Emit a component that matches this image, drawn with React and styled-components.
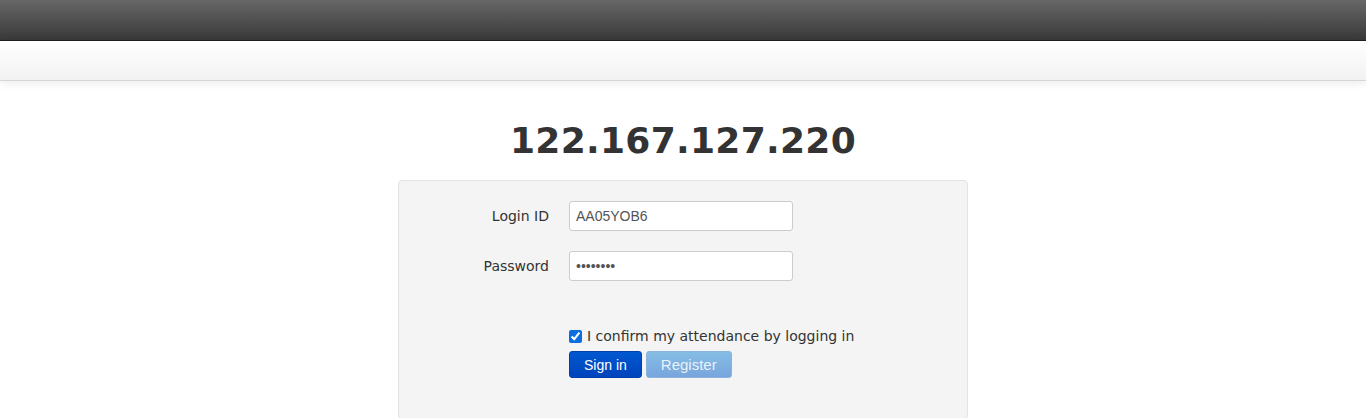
import React from "react"
import styled, { createGlobalStyle } from "styled-components"

// Login page: dark top bar, light subnav, host heading and a grey form well

const GlobalStyle = createGlobalStyle`
  html, body {
    margin: 0;
    padding: 0;
    background: #fff;
    font-family: "DejaVu Sans", Verdana, sans-serif;
    color: #333;
  }
`

const App = () => {
  return (
    <>
      <GlobalStyle />
      <TopBar />
      <SubNav />
      <Main>
        <Heading>122.167.127.220</Heading>
        <Well>
          <FieldRow>
            <Label htmlFor="login">Login ID</Label>
            <Input id="login" type="text" defaultValue="AA05YOB6" />
          </FieldRow>
          <FieldRow>
            <Label htmlFor="password">Password</Label>
            <Input id="password" type="password" defaultValue="12345678" />
          </FieldRow>
          <Actions>
            <CheckLine>
              <Check type="checkbox" defaultChecked />
              I confirm my attendance by logging in
            </CheckLine>
            <Buttons>
              <Button $variant="primary">Sign in</Button>
              <Button $variant="muted">Register</Button>
            </Buttons>
          </Actions>
        </Well>
      </Main>
    </>
  )
}

const TopBar = styled.div`
  height: 40px;
  background: linear-gradient(to bottom, #676767, #393939);
  border-bottom: 1px solid #1f1f1f;
`

const SubNav = styled.div`
  height: 39px;
  background: linear-gradient(to bottom, #ffffff, #f2f2f2);
  border-bottom: 1px solid #d6d6d6;
  box-shadow: 0 1px 10px rgba(0, 0, 0, 0.1);
`

const Main = styled.main`
  display: flex;
  flex-direction: column;
  align-items: center;
  padding-top: 40px;
`

const Heading = styled.h1`
  margin: 0 0 19px;
  font-size: 36px;
  line-height: 40px;
  font-weight: bold;
  letter-spacing: 0.3px;
  color: #333;
`

const Well = styled.section`
  box-sizing: border-box;
  width: 570px;
  padding: 20px 20px 40px;
  background: #f4f4f4;
  border: 1px solid #e3e3e3;
  border-radius: 4px;
  display: grid;
  grid-template-columns: 130px 1fr;
  column-gap: 20px;
  row-gap: 20px;
`

const FieldRow = styled.div`
  display: contents;
`

const Label = styled.label`
  align-self: center;
  text-align: right;
  font-size: 14px;
  line-height: 20px;
  color: #333;
`

const Input = styled.input`
  box-sizing: border-box;
  width: 224px;
  height: 30px;
  padding: 4px 6px;
  border: 1px solid #ccc;
  border-radius: 3px;
  background: #fff;
  font-family: "Liberation Sans", Arial, sans-serif;
  font-size: 14px;
  color: #555;
  outline: none;
`

const Actions = styled.div`
  grid-column: 2;
  margin-top: 25px;
  display: flex;
  flex-direction: column;
  gap: 5px;
`

const CheckLine = styled.label`
  display: flex;
  align-items: center;
  gap: 5px;
  font-size: 14px;
  line-height: 20px;
  color: #333;
`

const Check = styled.input`
  width: 13px;
  height: 13px;
  margin: 0;
  accent-color: #0b6ee0;
`

const Buttons = styled.div`
  display: flex;
  gap: 4px;
`

const Button = styled.button`
  box-sizing: border-box;
  height: 27px;
  padding: 0 14px;
  border-radius: 3px;
  font-family: "Liberation Sans", Arial, sans-serif;
  font-size: ${(p) => (p.$variant === "primary" ? "14px" : "15px")};
  color: ${(p) => (p.$variant === "primary" ? "#fff" : "rgba(255,255,255,0.85)")};
  border: 1px solid ${(p) => (p.$variant === "primary" ? "#0040a8" : "#8ab3de")};
  background: ${(p) =>
    p.$variant === "primary"
      ? "linear-gradient(to bottom, #0058d0, #0044bc)"
      : "linear-gradient(to bottom, #85bde4, #78a5dd)"};
`

export default App
